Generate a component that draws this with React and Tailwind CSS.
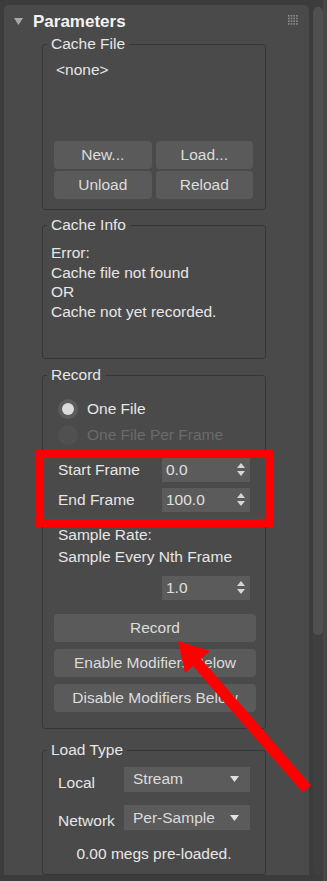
import React from "react";

const Btn = ({ children, className = "" }) => (
  <div
    className={
      "flex h-[28px] items-center justify-center rounded-[4px] bg-[#5a5a5a] text-[#dcdcdc] " +
      className
    }
  >
    {children}
  </div>
);

const SpinArrows = () => (
  <svg width="8" height="14" viewBox="0 0 8 14">
    <path d="M4 0 L8 5 L0 5 Z" fill="#d6d6d6" />
    <path d="M0 8 L8 8 L4 13 Z" fill="#d6d6d6" />
  </svg>
);

const Spinner = ({ value }) => (
  <div className="flex h-[24px] w-[88px] items-center justify-between bg-[#5b5b5b] pl-[4px] pr-[5px] text-[#e0e0e0]">
    <span>{value}</span>
    <SpinArrows />
  </div>
);

const Dropdown = ({ value }) => (
  <div className="flex h-[25px] w-[126px] items-center justify-between bg-[#5b5b5b] pl-[9px] pr-[11px] text-[#dcdcdc]">
    <span>{value}</span>
    <svg width="9" height="6" viewBox="0 0 9 6">
      <path d="M0 0 L9 0 L4.5 6 Z" fill="#e0e0e0" />
    </svg>
  </div>
);

const Group = ({ label, children, className = "" }) => (
  <fieldset
    className={
      "ml-[38px] w-[224px] rounded-[3px] border border-[#363636] " + className
    }
  >
    <legend className="ml-[4px] px-[4px] leading-[18px] text-[#e6e6e6]">
      {label}
    </legend>
    {children}
  </fieldset>
);

export default function App() {
  return (
    <div className="relative flex h-[881px] w-[327px] overflow-hidden bg-[#3c3c3c] font-['Liberation_Sans',Arial,sans-serif] text-[15.5px] leading-[18px] text-[#e6e6e6]">
      {/* Panel */}
      <div className="ml-[4px] mt-[5px] flex h-[870px] w-[305px] flex-col rounded-t-[5px] bg-[#4a4a4a]">
        {/* Header */}
        <div className="flex h-[30px] shrink-0 items-center">
          <svg className="ml-[10px] mt-[2px]" width="9" height="7" viewBox="0 0 9 7">
            <path d="M0 0 L9 0 L4.5 7 Z" fill="#a8a8a8" />
          </svg>
          <span className="ml-[10px] mt-[3px] text-[17px] font-bold text-[#f2f2f2]">
            Parameters
          </span>
          <svg
            className="ml-auto mr-[11px]"
            width="10"
            height="10"
            viewBox="0 0 10 10"
          >
            {[0, 1, 2, 3].map((r) =>
              [0, 1, 2, 3].map((c) => (
                <rect
                  key={r + "-" + c}
                  x={c * 2.7}
                  y={r * 2.7}
                  width="1.6"
                  height="1.6"
                  fill="#8e8e8e"
                />
              ))
            )}
          </svg>
        </div>

        {/* Cache File */}
        <Group label="Cache File">
          <div className="pl-[13px] pt-[8px]">&lt;none&gt;</div>
          <div className="mt-[62px] grid grid-cols-2 gap-x-[4px] gap-y-[2px] pb-[10px] pl-[11px] pr-[12px]">
            <Btn>New...</Btn>
            <Btn>Load...</Btn>
            <Btn>Unload</Btn>
            <Btn>Reload</Btn>
          </div>
        </Group>

        {/* Cache Info */}
        <Group label="Cache Info" className="mt-[6px]">
          <div className="pb-[37px] pl-[8px] pt-[9px] leading-[19.5px]">
            <div>Error:</div>
            <div>Cache file not found</div>
            <div>OR</div>
            <div>Cache not yet recorded.</div>
          </div>
        </Group>

        {/* Record */}
        <Group label="Record" className="mt-[7px]">
          <div className="pb-[16px] pt-[12px]">
            <div className="flex h-[26px] items-center pl-[15px]">
              <div className="flex h-[20px] w-[20px] items-center justify-center rounded-full bg-[#5c5c5c]">
                <div className="h-[12px] w-[12px] rounded-full bg-[#dcdcdc]" />
              </div>
              <span className="ml-[9px]">One File</span>
            </div>
            <div className="flex h-[26px] items-center pl-[15px]">
              <div className="h-[20px] w-[20px] rounded-full bg-[#505050]" />
              <span className="ml-[9px] text-[#6b6b6b]">One File Per Frame</span>
            </div>

            <div className="mt-[10px] flex flex-col gap-[6px] pl-[15px]">
              <div className="flex items-center">
                <span className="w-[104px]">Start Frame</span>
                <Spinner value="0.0" />
              </div>
              <div className="flex items-center">
                <span className="w-[104px]">End Frame</span>
                <Spinner value="100.0" />
              </div>
            </div>

            <div className="mt-[12px] pl-[15px]">
              <div className="flex h-[22px] items-center">Sample Rate:</div>
              <div className="flex h-[22px] items-center">
                Sample Every Nth Frame
              </div>
              <div className="mt-[8px] pl-[104px]">
                <Spinner value="1.0" />
              </div>
            </div>

            <div className="mt-[14px] flex flex-col gap-[7px] pl-[11px] pr-[9px]">
              <Btn>Record</Btn>
              <Btn>Enable Modifiers Below</Btn>
              <Btn>Disable Modifiers Below</Btn>
            </div>
          </div>
        </Group>

        {/* Load Type */}
        <Group label="Load Type" className="mt-[12px]">
          <div className="pb-[11px] pt-[7px]">
            <div className="flex items-center pl-[15px]">
              <span className="mt-[8px] w-[66px]">Local</span>
              <Dropdown value="Stream" />
            </div>
            <div className="mt-[13px] flex items-center pl-[15px]">
              <span className="mt-[6px] w-[66px]">Network</span>
              <Dropdown value="Per-Sample" />
            </div>
            <div className="mt-[15px] text-center">0.00 megs pre-loaded.</div>
          </div>
        </Group>
      </div>

      {/* Scrollbar */}
      <div className="ml-[4px] mt-[7px] flex h-[868px] w-[10px] flex-col rounded-[5px] bg-[#3f3f3f]">
        <div className="h-[628px] w-[10px] rounded-[5px] bg-[#505050]" />
      </div>
      <div className="h-[881px] w-[4px] bg-[#474747]" />

      {/* Annotation: red rectangle */}
      <div className="pointer-events-none absolute left-[36px] top-[450px] h-[77px] w-[237px] border-[8px] border-[#ff0000]" />

      {/* Annotation: red arrow */}
      <svg
        className="pointer-events-none absolute left-0 top-0"
        width="327"
        height="881"
        viewBox="0 0 327 881"
      >
        <line
          x1="194"
          y1="659"
          x2="307"
          y2="789"
          stroke="#ff0000"
          strokeWidth="11"
        />
        <polygon points="178,641 185,673 210,651" fill="#ff0000" />
      </svg>
    </div>
  );
}
